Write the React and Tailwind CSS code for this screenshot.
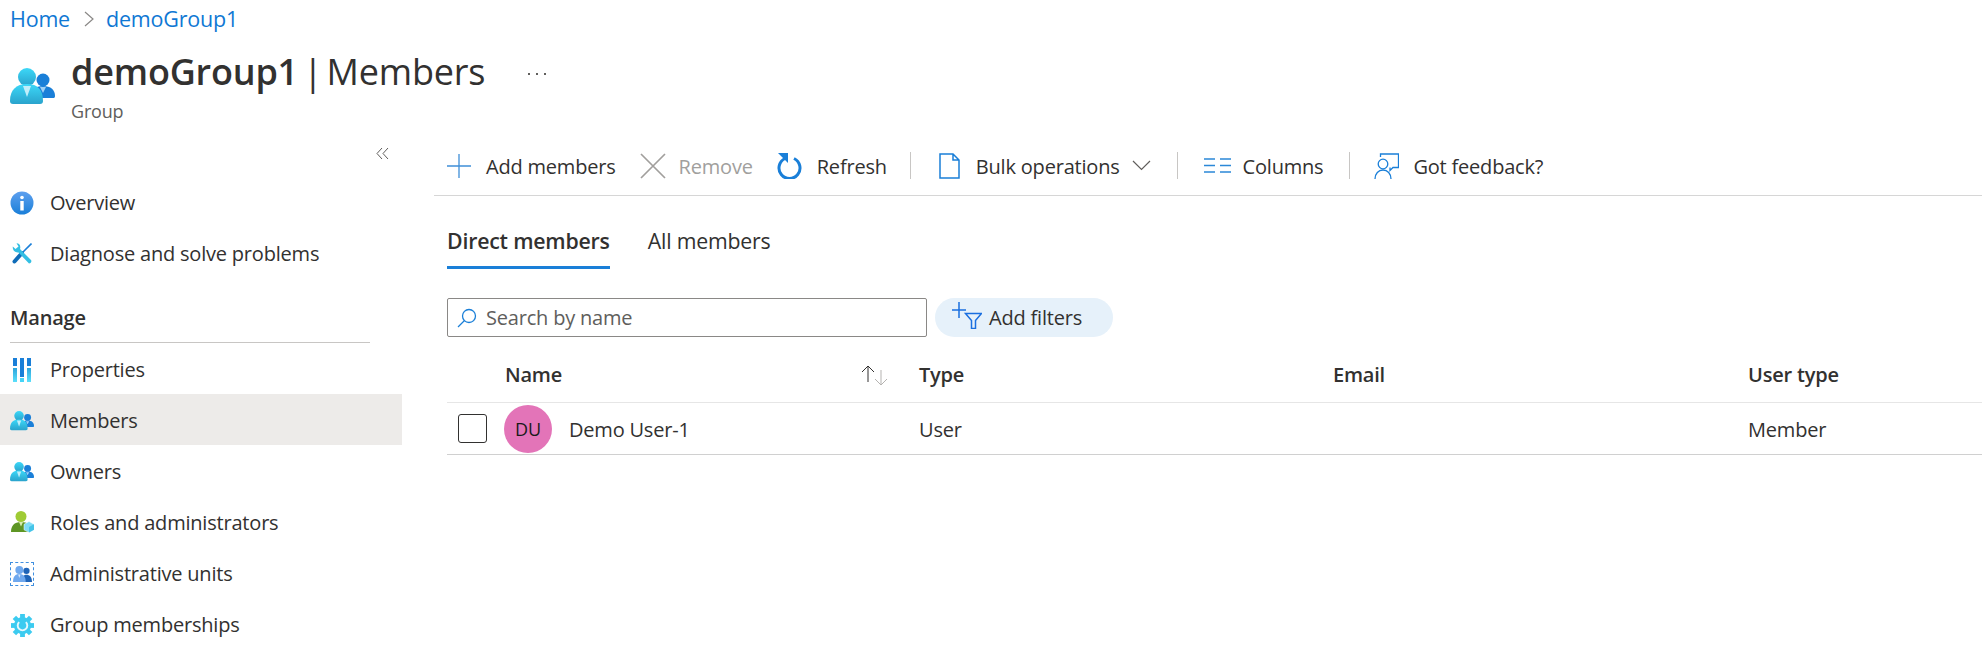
import React from 'react';

const PeopleIcon = ({ size = 24, id = 'pa' }) => (
  <svg width={size} height={size * 0.8} viewBox="0 0 45 36" className="shrink-0">
    <defs>
      <linearGradient id={id} x1="0" y1="0" x2="0" y2="1">
        <stop offset="0" stopColor="#3cd8f8" />
        <stop offset="1" stopColor="#2aa3cc" />
      </linearGradient>
    </defs>
    <circle cx="33" cy="12" r="6.500" fill="#1a7fd8" />
    <path d="M21 30c0-8 4-12 12-12s12 4 12 10c0 1.500-.5 2-2 2z" fill="#1a7fd8" />
    <path d="M30 19l3 6 3-6z" fill="#9fd0f5" />
    <circle cx="17" cy="9" r="9" fill={`url(#${id})`} />
    <path d="M0 33C0 22 6 16 17 16s16 6 16 17c0 2-1 3-3 3H3c-2 0-3-1-3-3z" fill={`url(#${id})`} />
    <path d="M13 18l4 11 4-11z" fill="#c0eefa" />
  </svg>
);

const InfoIcon = () => (
  <svg width="24" height="24" viewBox="0 0 24 24" className="shrink-0">
    <defs>
      <linearGradient id="inf" x1="0" y1="0" x2="0" y2="1">
        <stop offset="0" stopColor="#5ea0ef" />
        <stop offset="1" stopColor="#1a7fd8" />
      </linearGradient>
    </defs>
    <circle cx="12" cy="12" r="11.500" fill="url(#inf)" />
    <circle cx="12" cy="6.500" r="1.800" fill="#fff" />
    <rect x="10.300" y="10" width="3.400" height="9.500" fill="#fff" />
  </svg>
);

const ToolsIcon = () => (
  <svg width="20" height="21" viewBox="0 0 20 21" className="shrink-0">
    <path d="M19.500.5L10 10" stroke="#1a7fd8" strokeWidth="1.600" />
    <path d="M10 10L2.500 18.500" stroke="#0f6cb8" strokeWidth="4" strokeLinecap="round" />
    <path
      d="M4.500.3C7.500.3 9 3 8 6l11 11c1 1.500 0 3.500-2 3.500L6.500 9.500C3 10 .3 7 .8 3.500L3.500 6l3-2.500z"
      fill="#33bfe3"
    />
  </svg>
);

const PropsIcon = () => (
  <svg width="18" height="24" viewBox="0 0 18 24" className="shrink-0">
    <defs>
      <linearGradient id="pr" x1="0" y1="0" x2="0" y2="1">
        <stop offset="0" stopColor="#2ea4dc" />
        <stop offset="1" stopColor="#5be0fb" />
      </linearGradient>
    </defs>
    <rect x="0" y="0" width="4" height="8" fill="#1a7fd8" />
    <rect x="0" y="10" width="4" height="14" fill="url(#pr)" />
    <rect x="7" y="0" width="4" height="19" fill="#1a7fd8" />
    <rect x="7" y="20" width="4" height="4" fill="#45d4f7" />
    <rect x="14" y="0" width="4" height="8" fill="#1a7fd8" />
    <rect x="14" y="10" width="4" height="14" fill="url(#pr)" />
  </svg>
);

const RolesIcon = () => (
  <svg width="24" height="24" viewBox="0 0 24 24" className="shrink-0">
    <circle cx="11" cy="5.500" r="5.500" fill="#9fcb35" />
    <path d="M1 21c0-6 3-10 10-10s8 3 9 6l-2 4z" fill="#5e9624" />
    <path d="M9 11l2 4.500 2-4.500z" fill="#d8edb0" />
    <path d="M19 10.500l5 2.800v5.500l-5 2.800-5-2.800v-5.500z" fill="#7fdcf5" stroke="#fff" strokeWidth=".5" />
    <path d="M19 16l5-2.700v5.500l-5 2.800z" fill="#45c4e8" />
  </svg>
);

const UnitsIcon = () => (
  <div className="w-6 h-6 border border-dashed border-[#3f8fe0] flex items-center justify-center shrink-0">
    <svg width="19" height="16" viewBox="0 0 24 20">
      <circle cx="17" cy="6" r="4" fill="#1f64b8" />
      <path d="M11 20c0-6 2-9 6-9s7 3 7 9z" fill="#1f64b8" />
      <circle cx="8" cy="5" r="5" fill="#6fa8ee" />
      <path d="M0 20c0-7 3-10 8-10s8 3 8 10z" fill="#6fa8ee" />
      <path d="M6.500 10.500L8 15l1.500-4.500z" fill="#d5e6fb" />
    </svg>
  </div>
);

const GearIcon = () => (
  <svg width="23" height="23" viewBox="0 0 24 24" className="shrink-0">
    <circle cx="12" cy="12" r="9" fill="#3ccbf0" />
    <rect x="9.500" y="0" width="5" height="24" fill="#3ccbf0" />
    <rect x="9.500" y="0" width="5" height="24" fill="#3ccbf0" transform="rotate(45 12 12)" />
    <rect x="9.500" y="0" width="5" height="24" fill="#3ccbf0" transform="rotate(90 12 12)" />
    <rect x="9.500" y="0" width="5" height="24" fill="#3ccbf0" transform="rotate(135 12 12)" />
    <path d="M8.500 8.500a5 5 0 1 0 7 0" fill="none" stroke="#e5f8fd" strokeWidth="2" />
  </svg>
);

const navTop = [
  { label: 'Overview', icon: <InfoIcon /> },
  { label: 'Diagnose and solve problems', icon: <ToolsIcon /> },
];

const navManage = [
  { label: 'Properties', icon: <PropsIcon />, low: true },
  { label: 'Members', icon: <PeopleIcon id="p1" />, active: true, low: true },
  { label: 'Owners', icon: <PeopleIcon id="p2" />, low: true },
  { label: 'Roles and administrators', icon: <RolesIcon />, low: true },
  { label: 'Administrative units', icon: <UnitsIcon />, low: true },
  { label: 'Group memberships', icon: <GearIcon />, low: true },
];

const NavItem = ({ item }) => (
  <div className={`h-[51px] flex items-center pl-[10px] ${item.active ? 'bg-[#edebe9]' : ''} ${item.low ? 'pt-[3px]' : ''}`}>
    <div className="w-[24px] flex justify-center shrink-0">{item.icon}</div>
    <span className="ml-[16px] text-[20px] text-[#323130] whitespace-nowrap">{item.label}</span>
  </div>
);

const Sep = () => <div className="w-px h-[27px] bg-[#c8c6c4]" />;

const Toolbar = () => (
  <div className="h-[66px] pt-[6px] border-b border-[#d6d6d6] flex items-center pl-[13px] text-[20px] text-[#323130] whitespace-nowrap">
    <svg width="24" height="24" viewBox="0 0 24 24" className="shrink-0">
      <path d="M12 0v24M0 12h24" stroke="#3f8fd8" strokeWidth="1.300" />
    </svg>
    <span className="ml-[15px] pt-[2px]">Add members</span>
    <svg width="26" height="26" viewBox="0 0 26 26" className="ml-[24px] shrink-0">
      <path d="M1 1l24 24M25 1L1 25" stroke="#a19f9d" strokeWidth="1.700" />
    </svg>
    <span className="ml-[13px] pt-[2px] text-[#a19f9d]">Remove</span>
    <svg width="25" height="26" viewBox="0 0 25 26" className="ml-[24px] shrink-0">
      <path d="M8 5.500a10.500 10.500 0 1 0 9 0" fill="none" stroke="#1a7fd8" strokeWidth="3" />
      <path d="M1 0h10v10z" fill="#1a7fd8" />
    </svg>
    <span className="ml-[15px] pt-[2px]">Refresh</span>
    <div className="ml-[23px]"><Sep /></div>
    <svg width="21" height="26" viewBox="0 0 21 26" className="ml-[28px] shrink-0">
      <path d="M1 1h13l6 6v18H1z M14 1v6h6" fill="none" stroke="#1a7fd8" strokeWidth="1.500" />
    </svg>
    <span className="ml-[16px] pt-[2px]">Bulk operations</span>
    <svg width="19" height="11" viewBox="0 0 19 11" className="ml-[12px] shrink-0">
      <path d="M1 1l8.500 8.500L18 1" fill="none" stroke="#605e5c" strokeWidth="1.200" />
    </svg>
    <div className="ml-[26px]"><Sep /></div>
    <svg width="27" height="15" viewBox="0 0 27 15" className="ml-[26px] shrink-0">
      <path d="M0 1h11M16 1h11M0 7.500h11M16 7.500h11M0 14h11M16 14h11" stroke="#2b88d8" strokeWidth="1.500" />
    </svg>
    <span className="ml-[12px] pt-[2px]">Columns</span>
    <div className="ml-[26px]"><Sep /></div>
    <svg width="25" height="26" viewBox="0 0 25 26" className="ml-[24px] shrink-0">
      <path d="M6.500 4V1h18v13.500H19l-3 3v-3" fill="none" stroke="#1a7fd8" strokeWidth="1.300" />
      <circle cx="9" cy="11" r="4.800" fill="#fff" stroke="#1a7fd8" strokeWidth="1.300" />
      <path d="M1 26c0-5.500 3.500-9 8-9s8 3.500 8 9" fill="none" stroke="#1a7fd8" strokeWidth="1.300" />
    </svg>
    <span className="ml-[14px] pt-[2px]">Got feedback?</span>
  </div>
);

const Tabs = () => (
  <div className="flex gap-[38px] text-[21.3px] mt-[23px]">
    <div className="h-[50px] flex flex-col">
      <span className="h-[47px] pb-[3px] flex items-center font-semibold text-[#323130] whitespace-nowrap">Direct members</span>
      <div className="h-[3px] bg-[#1a7fd8]" />
    </div>
    <span className="h-[47px] pb-[3px] flex items-center text-[#323130] whitespace-nowrap">All members</span>
  </div>
);

const Filters = () => (
  <div className="flex gap-[8px] mt-[29px]">
    <div className="w-[480px] h-[39px] border border-[#8a8886] rounded-[2px] flex items-center pl-[9px]">
      <svg width="20" height="20" viewBox="0 0 20 20" className="shrink-0">
        <circle cx="12" cy="8" r="6.500" fill="none" stroke="#1a7fd8" strokeWidth="1.300" />
        <path d="M7.500 12.500L1 19" stroke="#1a7fd8" strokeWidth="1.300" />
      </svg>
      <span className="ml-[9px] text-[20px] text-[#605e5c]">Search by name</span>
    </div>
    <div className="w-[178px] h-[39px] rounded-full bg-[#e6f1fa] flex items-center pl-[17px]">
      <svg width="30" height="27" viewBox="0 0 30 27" className="shrink-0 mb-[4px]">
        <path d="M7 0v16M0 8h14" stroke="#1a6fe0" strokeWidth="1.500" />
        <path d="M13.500 11.500h16l-6 7v8h-4v-8z" fill="none" stroke="#1a6fe0" strokeWidth="1.500" />
      </svg>
      <span className="ml-[7px] text-[20px] text-[#323130]">Add filters</span>
    </div>
  </div>
);

const MembersTable = () => (
  <div className="mt-[14px] text-[20px] text-[#323130]">
    <div className="h-[52px] pb-[3px] flex items-center font-semibold border-b border-[#e6e6e6]">
      <div className="w-[58px]" />
      <div className="w-[414px] flex items-center justify-between pr-[31px]">
        <span>Name</span>
        <svg width="27" height="21" viewBox="0 0 27 21">
          <path d="M7 17V1M1 7l6-6 6 6" fill="none" stroke="#323130" strokeWidth="1" />
          <path d="M20 5v15M14 14l6 6 6-6" fill="none" stroke="#b5b3b1" strokeWidth="1" />
        </svg>
      </div>
      <div className="w-[414px]">Type</div>
      <div className="w-[415px]">Email</div>
      <div>User type</div>
    </div>
    <div className="h-[52px] flex items-center border-b border-[#d0d0d0]">
      <div className="w-[58px] pl-[11px]">
        <div className="w-[29px] h-[29px] border border-[#323130] rounded-[3px]" />
      </div>
      <div className="w-[414px] flex items-center">
        <div className="w-[48px] h-[48px] pt-[2px] rounded-full bg-[#e374b8] flex items-center justify-center text-[#1a1a1a] text-[18px] -ml-[1px]">DU</div>
        <span className="ml-[17px] pt-[2px]">Demo User-1</span>
      </div>
      <div className="w-[414px] pt-[2px]">User</div>
      <div className="w-[415px]" />
      <div className="pt-[2px]">Member</div>
    </div>
  </div>
);

export default function App() {
  return (
    <div className="w-[1982px] h-[658px] overflow-hidden bg-white font-['Open_Sans','Noto_Sans',sans-serif] flex flex-col tracking-[-0.2px]">
      <div className="h-[38px] flex items-center pl-[10px] text-[21.5px] text-[#0f78d4]">
        <span>Home</span>
        <svg width="12" height="18" viewBox="0 0 12 18" className="ml-[13px] mr-[11px]">
          <path d="M2 2l8 7-8 7" fill="none" stroke="#8a8886" strokeWidth="1.200" />
        </svg>
        <span>demoGroup1</span>
      </div>
      <div className="h-[92px] flex pl-[10px]">
        <div className="pt-[30px]">
          <PeopleIcon size={45} id="ph" />
        </div>
        <div className="ml-[16px] pt-[9px]">
          <div className="flex items-center h-[50px]">
            <h1 className="flex text-[36px] text-[#323130] whitespace-nowrap">
              <span className="font-semibold">demoGroup1</span>
              <span className="ml-[5px]">|</span>
              <span className="ml-[4px]">Members</span>
            </h1>
            <div className="ml-[43px] mt-[3px] flex gap-[6px]">
              <div className="w-[2px] h-[2px] bg-[#605e5c]" />
              <div className="w-[2px] h-[2px] bg-[#605e5c]" />
              <div className="w-[2px] h-[2px] bg-[#605e5c]" />
            </div>
          </div>
          <div className="text-[18px] text-[#605e5c] mt-[1px]">Group</div>
        </div>
      </div>
      <div className="flex flex-1 min-h-0">
        <aside className="w-[402px] shrink-0 flex flex-col">
          <div className="h-[47px] flex items-center justify-end pr-[13px]">
            <svg width="13" height="13" viewBox="0 0 13 13">
              <path d="M6 1L1 6.500 6 12M12 1L7 6.500 12 12" fill="none" stroke="#605e5c" strokeWidth="1" />
            </svg>
          </div>
          {navTop.map((item) => <NavItem key={item.label} item={item} />)}
          <div className="mt-[15px] mx-[10px] w-[360px] h-[49px] border-b border-[#c8c6c4] flex items-center text-[20px] font-semibold text-[#323130]">
            Manage
          </div>
          {navManage.map((item) => <NavItem key={item.label} item={item} />)}
        </aside>
        <main className="flex-1 min-w-0 ml-[32px]">
          <Toolbar />
          <div className="pl-[13px]">
            <Tabs />
            <Filters />
            <MembersTable />
          </div>
        </main>
      </div>
    </div>
  );
}
